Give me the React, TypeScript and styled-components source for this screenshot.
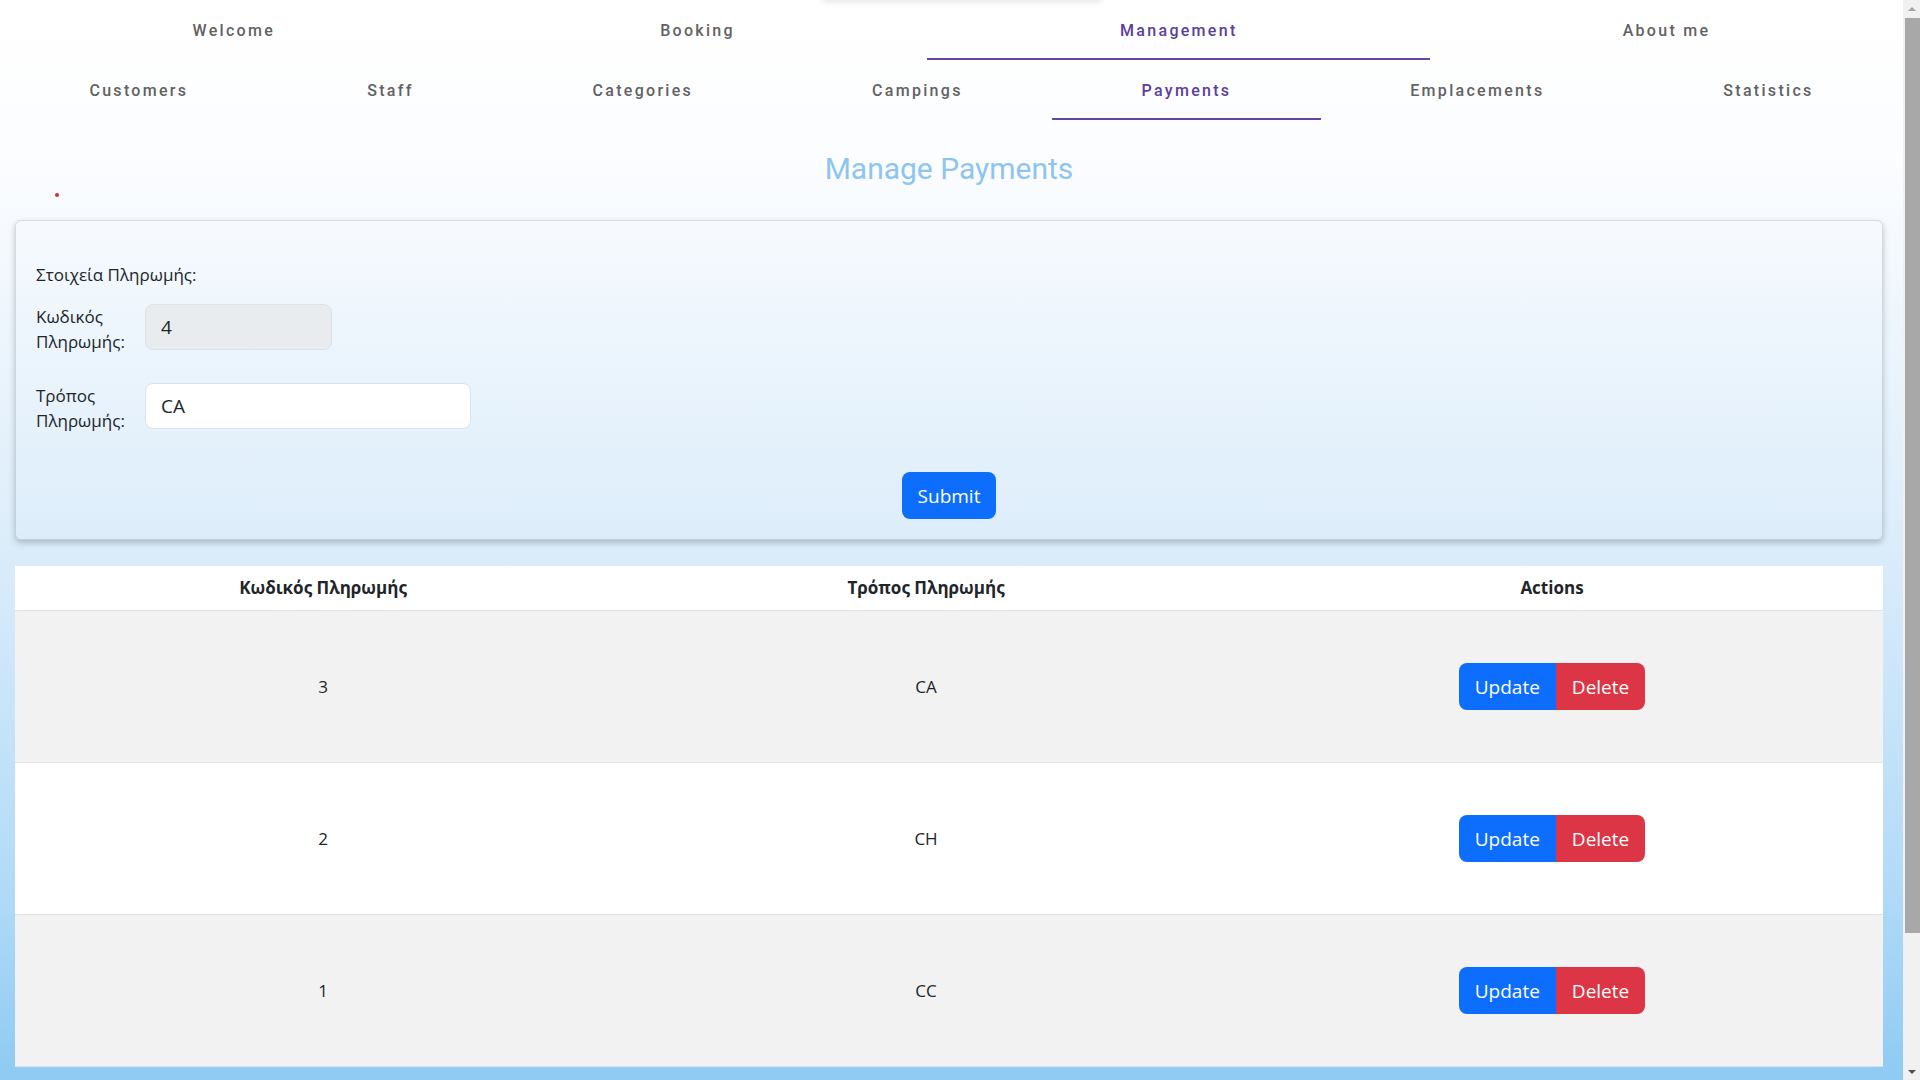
import React from 'react';
import styled, { createGlobalStyle } from 'styled-components';

interface Payment {
  id: number;
  method: string;
}

const payments: Payment[] = [
  { id: 3, method: 'CA' },
  { id: 2, method: 'CH' },
  { id: 1, method: 'CC' },
];

const mainTabs = ['Welcome', 'Booking', 'Management', 'About me'];
const subTabs = ['Customers', 'Staff', 'Categories', 'Campings', 'Payments', 'Emplacements', 'Statistics'];

const App: React.FC = () => {
  return (
    <>
      <GlobalStyle />
      <Page>
        <PopoverEdge />
        <TabRow>
          {mainTabs.map((t) => (
            <Tab key={t} $active={t === 'Management'}>{t}</Tab>
          ))}
        </TabRow>
        <TabRow>
          {subTabs.map((t) => (
            <Tab key={t} $active={t === 'Payments'}>{t}</Tab>
          ))}
        </TabRow>

        <Content>
          <Title>Manage Payments</Title>
          <ErrorRow>
            <ErrorDot />
          </ErrorRow>

          <FormCard onSubmit={(e) => e.preventDefault()}>
            <FormHeading>Στοιχεία Πληρωμής:</FormHeading>
            <FieldRow>
              <FieldLabel htmlFor="pay-id">Κωδικός Πληρωμής:</FieldLabel>
              <TextInput id="pay-id" $width={187} $readOnly readOnly defaultValue="4" />
            </FieldRow>
            <FieldRow $gap={29}>
              <FieldLabel htmlFor="pay-method">Τρόπος Πληρωμής:</FieldLabel>
              <TextInput id="pay-method" $width={326} defaultValue="CA" />
            </FieldRow>
            <SubmitButton type="submit">Submit</SubmitButton>
          </FormCard>

          <Table>
            <colgroup>
              <Col $width={32.98} />
              <Col $width={31.58} />
              <Col $width={35.44} />
            </colgroup>
            <thead>
              <tr>
                <Th>Κωδικός Πληρωμής</Th>
                <Th>Τρόπος Πληρωμής</Th>
                <Th>Actions</Th>
              </tr>
            </thead>
            <tbody>
              {payments.map((p, i) => (
                <Row key={p.id} $striped={i % 2 === 0}>
                  <Td>{p.id}</Td>
                  <Td>{p.method}</Td>
                  <Td>
                    <ButtonGroup>
                      <ActionButton $variant="primary">Update</ActionButton>
                      <ActionButton $variant="danger">Delete</ActionButton>
                    </ButtonGroup>
                  </Td>
                </Row>
              ))}
            </tbody>
          </Table>
        </Content>
      </Page>

      {/* the browser's own scrollbar is hidden in the capture, so draw one */}
      <ScrollTrack>
        <ScrollButton>
          <ScrollArrow $dir="up" />
        </ScrollButton>
        <ScrollThumb />
        <ScrollFill />
        <ScrollButton>
          <ScrollArrow $dir="down" />
        </ScrollButton>
      </ScrollTrack>
    </>
  );
};

export default App;

const GlobalStyle = createGlobalStyle`
  html, body {
    margin: 0;
    padding: 0;
  }

  body {
    font-family: "Open Sans", "Noto Sans", sans-serif;
    color: #212529;
    background: #8fcbf3;
  }
`;

const Page = styled.div`
  position: relative;
  margin-right: 17px;
  padding-bottom: 172px;
  background: linear-gradient(
    180deg,
    #ffffff 0px,
    #fcfdff 150px,
    #dcedfa 540px,
    #b3dbf7 880px,
    #8fcbf3 1075px,
    #8fcbf3 100%
  );
`;

const PopoverEdge = styled.div`
  position: absolute;
  top: -30px;
  left: 822px;
  width: 280px;
  height: 30px;
  background: #fff;
  border-radius: 4px;
  box-shadow: 0 2px 6px rgba(0, 0, 0, 0.1);
`;

const TabRow = styled.nav`
  display: flex;
  height: 60px;
`;

const Tab = styled.a<{ $active?: boolean }>`
  flex: 1 1 auto;
  position: relative;
  display: flex;
  align-items: center;
  justify-content: center;
  font-family: Roboto, "Liberation Sans", sans-serif;
  font-weight: 500;
  font-size: 16px;
  letter-spacing: 2.3px;
  color: ${(p) => (p.$active ? '#5b3e9c' : '#626262')};
  cursor: pointer;

  &::after {
    content: '';
    position: absolute;
    left: 0;
    right: 0;
    bottom: 0;
    height: 2px;
    background: ${(p) => (p.$active ? '#6445a4' : 'transparent')};
  }
`;

const Content = styled.main`
  padding: 0 20px 0 15px;
`;

const Title = styled.h1`
  margin: 31px 0 0;
  font-family: Roboto, "Liberation Sans", sans-serif;
  font-weight: 400;
  font-size: 30px;
  line-height: 36px;
  text-align: center;
  color: #8ec5ee;
`;

const ErrorRow = styled.div`
  height: 33px;
  padding-left: 40px;
  padding-top: 6px;
  box-sizing: border-box;
`;

const ErrorDot = styled.span`
  display: block;
  width: 4px;
  height: 4px;
  border-radius: 50%;
  background: #d32f2f;
`;

const FormCard = styled.form`
  display: flex;
  flex-direction: column;
  padding: 41px 20px 20px;
  border: 1px solid rgba(0, 0, 0, 0.12);
  border-radius: 6px;
  box-shadow: 0 3px 6px rgba(0, 0, 0, 0.22);
`;

const FormHeading = styled.div`
  font-size: 17px;
  line-height: 25px;
  margin-bottom: 17px;
`;

const FieldRow = styled.div<{ $gap?: number }>`
  display: grid;
  grid-template-columns: 96px auto;
  column-gap: 13px;
  align-items: start;
  justify-content: start;
  margin-top: ${(p) => p.$gap ?? 0}px;
`;

const FieldLabel = styled.label`
  font-size: 17px;
  line-height: 25px;
`;

const TextInput = styled.input<{ $width: number; $readOnly?: boolean }>`
  width: ${(p) => p.$width}px;
  height: 46px;
  box-sizing: border-box;
  padding: 0 15px;
  border: 1px solid #dee2e6;
  border-radius: 8px;
  font-family: inherit;
  font-size: 19px;
  color: #212529;
  background: ${(p) => (p.$readOnly ? '#e9ecef' : '#fff')};
  outline: none;
`;

const SubmitButton = styled.button`
  align-self: center;
  margin-top: 39px;
  height: 47px;
  padding: 0 16px;
  border: none;
  border-radius: 8px;
  background: #0d6efd;
  color: #fff;
  font-family: inherit;
  font-size: 19px;
  cursor: pointer;
`;

const Table = styled.table`
  width: 100%;
  margin-top: 26px;
  border-collapse: collapse;
  table-layout: fixed;
  background: #fff;
`;

const Col = styled.col<{ $width: number }>`
  width: ${(p) => p.$width}%;
`;

const Th = styled.th`
  padding: 10px 8px;
  font-size: 17px;
  line-height: 24px;
  font-weight: 700;
  text-align: center;
  border-bottom: 1px solid #dee2e6;
`;

const Row = styled.tr<{ $striped: boolean }>`
  background: ${(p) => (p.$striped ? '#f2f2f2' : '#fff')};
`;

const Td = styled.td`
  padding: 52px 8px;
  font-size: 17px;
  line-height: 24px;
  text-align: center;
  vertical-align: middle;
  border-bottom: 1px solid #dee2e6;
`;

const ButtonGroup = styled.div`
  display: inline-flex;
  vertical-align: middle;
`;

const ActionButton = styled.button<{ $variant: 'primary' | 'danger' }>`
  height: 47px;
  padding: 0 16px;
  border: none;
  font-family: inherit;
  font-size: 19px;
  color: #fff;
  background: ${(p) => (p.$variant === 'primary' ? '#0d6efd' : '#dc3545')};
  border-radius: ${(p) => (p.$variant === 'primary' ? '8px 0 0 8px' : '0 8px 8px 0')};
  cursor: pointer;
`;

const ScrollTrack = styled.div`
  position: fixed;
  top: 0;
  right: 0;
  width: 17px;
  height: 100vh;
  display: flex;
  flex-direction: column;
  background: #f1f1f1;
  z-index: 10;
`;

const ScrollButton = styled.div`
  height: 17px;
  flex: none;
  display: flex;
  align-items: center;
  justify-content: center;
`;

const ScrollArrow = styled.span<{ $dir: 'up' | 'down' }>`
  width: 0;
  height: 0;
  border-left: 4px solid transparent;
  border-right: 4px solid transparent;
  ${(p) => (p.$dir === 'up' ? 'border-bottom: 4px solid #a3a3a3;' : 'border-top: 4px solid #505050;')}
`;

const ScrollThumb = styled.div`
  height: 915px;
  margin: 1px 0 0 2px;
  background: #a8a8a8;
  flex: none;
`;

const ScrollFill = styled.div`
  flex: 1;
`;
